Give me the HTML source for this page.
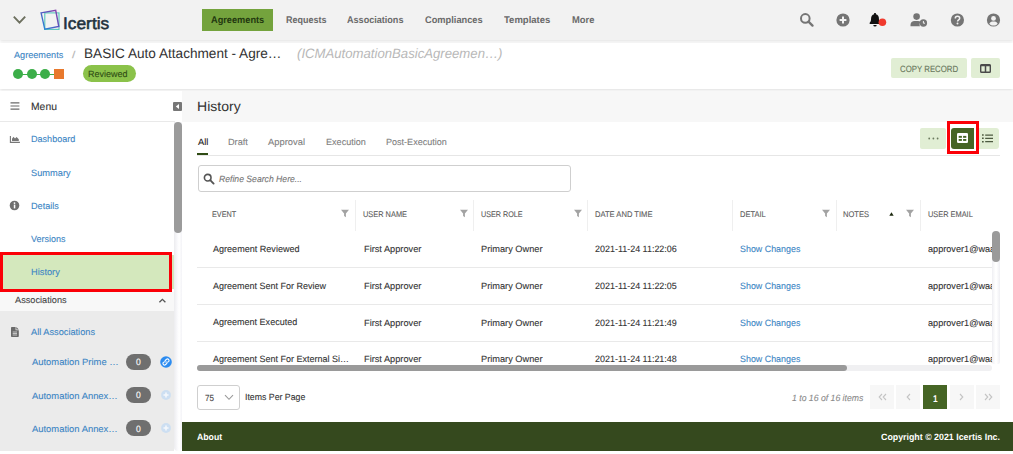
<!DOCTYPE html>
<html lang="en">
<head>
<meta charset="utf-8">
<title>History - Icertis Contract Management</title>
<style>
*{box-sizing:border-box;margin:0;padding:0}
html,body{width:1013px;height:454px;overflow:hidden;background:#fff}
body{font-family:"Liberation Sans",sans-serif;color:#333;position:relative}
a{text-decoration:none}
.b,.t,svg{position:absolute;display:block}
.t{white-space:nowrap;transform-origin:0 50%;font-weight:normal;text-rendering:geometricPrecision;-webkit-text-stroke:.1px currentColor}
.nav{font-size:9.7px;line-height:11.64px;color:#6a6a6a;font-weight:bold;-webkit-text-stroke:0;}
.navon{font-size:9.7px;line-height:11.64px;color:#22380f;font-weight:bold;-webkit-text-stroke:0;}
.logo{font-size:16.5px;line-height:19.8px;color:#22323d;-webkit-text-stroke:0.55px #22323d;}
.crumb{font-size:9.15px;line-height:10.98px;color:#3b85c4;}
.slash{font-size:10px;line-height:12.0px;color:#b5b5b5;}
.title{font-size:13.75px;line-height:16.5px;color:#333;-webkit-text-stroke:0;}
.sub{font-size:13.6px;line-height:16.32px;color:#b8b8b8;font-style:italic;-webkit-text-stroke:0;}
.pill{font-size:9.1px;line-height:10.92px;color:#2f4d14;}
.btn{font-size:9.1px;line-height:10.92px;color:#66755a;}
.menu{font-size:10.4px;line-height:12.48px;color:#333;}
.h1{font-size:13.6px;line-height:16.32px;color:#333;-webkit-text-stroke:0;}
.side{font-size:9.15px;line-height:10.98px;color:#3b85c4;}
.assoc{font-size:9.15px;line-height:10.98px;color:#444;}
.badge{font-size:9.15px;line-height:10.98px;color:#fff;}
.tabon{font-size:9.15px;line-height:10.98px;color:#222;}
.tab{font-size:9.15px;line-height:10.98px;color:#808080;}
.ph{font-size:9.15px;line-height:10.98px;color:#747474;font-style:italic;}
.th{font-size:8.3px;line-height:9.96px;color:#5a5a5a;}
.td{font-size:9.15px;line-height:10.98px;color:#333;}
.link{font-size:9.15px;line-height:10.98px;color:#3b85c4;}
.sel{font-size:9.15px;line-height:10.98px;color:#444;}
.ipp{font-size:9.15px;line-height:10.98px;color:#333;}
.info{font-size:9.15px;line-height:10.98px;color:#8a8a8a;font-style:italic;}
.pg1{font-size:9.8px;line-height:11.76px;color:#fff;font-weight:bold;-webkit-text-stroke:0;}
.foot{font-size:9.15px;line-height:10.98px;color:#fff;font-weight:bold;-webkit-text-stroke:0;}

/* blocks */
#nav-bg{left:0;top:0;width:1013px;height:40px;background:#f2f2f2;box-shadow:0 1px 3px rgba(0,0,0,.13)}
#nav-on{left:202px;top:9px;width:71px;height:22px;background:#74a33d}
#hdr-bg{left:0;top:43px;width:1013px;height:46px;background:#fff;box-shadow:0 1px 3px rgba(0,0,0,.14)}
.dot{width:10px;height:10px;border-radius:50%;background:#3cae49;top:69px}
#pill{left:83px;top:65px;width:53px;height:17px;border-radius:9px;background:#8bc24a}
.lbtn{background:#e1eed4;border-radius:2px}
#side-bg{left:0;top:91px;width:182px;height:360px;background:#fff}
#menu-line{left:0;top:121px;width:175px;height:1px;background:#e9e9e9}
#sb-track{left:174px;top:122px;width:8px;height:329px;border-radius:0 0 4px 4px;background:linear-gradient(90deg,#ececef,#fafafc 45%,#fff 65%,#f3f3f7)}
#sb-thumb{left:174px;top:122px;width:8px;height:111px;border-radius:4px;background:#9b9b9b}
#sel-bg{left:0;top:255px;width:174px;height:34px;background:#d4e8bd}
#sel-red{left:0;top:252px;width:172px;height:40px;border:3px solid #fb0007}
#assoc-hd{left:0;top:292px;width:174px;height:19px;background:#f8f8f8}
#assoc-bg{left:0;top:311px;width:174px;height:140px;background:#ebebeb}
.badge-bg{left:126px;width:25px;height:16px;border-radius:8px;background:#6f6f6f}
#band{left:182px;top:91px;width:831px;height:31px;background:#f7f7f7}
#tab-ul{left:197px;top:153px;width:11px;height:2px;background:#2f4b14}
#tab-line{left:197px;top:155px;width:803px;height:1px;background:#e6e6e6}
#search{left:198px;top:165px;width:373px;height:27px;border:1px solid #cfcfcf;border-radius:3px;background:#fff}
.colsep{top:200px;width:1px;height:31px;background:#efefef}
.rowsep{left:197px;width:795px;height:1px;background:#e9e9e9}
#vtrack{left:992px;top:231px;width:8px;height:134px;border-radius:4px;background:linear-gradient(90deg,#efeff3,#fff 45%,#fff 55%,#efeff3)}
#vthumb{left:992px;top:231px;width:8px;height:31px;border-radius:4px;background:#9a9a9a}
#htrack{left:197px;top:365px;width:795px;height:6px;border-radius:3px;background:#f0f0f2}
#hthumb{left:197px;top:365px;width:650px;height:6px;border-radius:3px;background:#9a9a9a}
#ppsel{left:197px;top:385px;width:43px;height:25px;border:1px solid #cfcfcf;border-radius:3px;background:#fff}
.pgb{top:385px;width:24px;height:24px;background:#f7f7f7}
#red2{left:947px;top:121px;width:32px;height:33px;border:3px solid #fb0007}
#foot-bg{left:182px;top:422px;width:831px;height:29px;background:#35491e}
</style>
</head>
<body>

<nav>
  <div class="b" id="nav-bg"></div>
  <svg style="left:12px;top:14px" width="16" height="12" viewBox="0 0 16 12"><path d="M1.8 2.6 L7.5 8.6 L13.2 2.6" fill="none" stroke="#6d705f" stroke-width="1.9"/></svg>
  <svg style="left:39px;top:8px" width="23" height="24" viewBox="0 0 23 24">
    <defs><linearGradient id="lg" x1="1" y1="0" x2="0" y2="1"><stop offset="0" stop-color="#8d3fa6"/><stop offset=".45" stop-color="#5a55c0"/><stop offset="1" stop-color="#1f8fd9"/></linearGradient></defs>
    <rect x="5.8" y="4.9" width="14.2" height="16.5" fill="none" stroke="#57c6bb" stroke-width="1.1"/>
    <path d="M2.1 4.9 L16.7 2.3 L19.8 18.5 L5.8 21.3 Z" fill="none" stroke="url(#lg)" stroke-width="1.4"/>
  </svg>
  <div class="b" id="nav-on"></div>
<span class="t logo" style="left:63.1px;top:15px;transform:scaleX(1.050);">Icertis</span>
<a class="t navon" style="left:210.8px;top:15px;transform:scaleX(0.951);">Agreements</a>
<a class="t nav" style="left:285.8px;top:15px;transform:scaleX(0.928);">Requests</a>
<a class="t nav" style="left:347.3px;top:15px;transform:scaleX(0.936);">Associations</a>
<a class="t nav" style="left:424.9px;top:15px;transform:scaleX(0.956);">Compliances</a>
<a class="t nav" style="left:503.8px;top:15px;transform:scaleX(0.982);">Templates</a>
<a class="t nav" style="left:571.5px;top:15px;transform:scaleX(0.967);">More</a>
  <!-- search -->
  <svg style="left:799px;top:13px" width="15" height="15" viewBox="0 0 15 15"><circle cx="6.300" cy="5.400" r="4.300" fill="none" stroke="#757575" stroke-width="2"/><path d="M9.500 8.600 L13.500 12.600" stroke="#757575" stroke-width="2.300" stroke-linecap="round"/></svg>
  <!-- plus circle -->
  <svg style="left:836px;top:13px" width="14" height="14" viewBox="0 0 14 14"><circle cx="7" cy="7" r="6.6" fill="#757575"/><path d="M7 3.6 V10.4 M3.6 7 H10.4" stroke="#f2f2f2" stroke-width="2"/></svg>
  <!-- bell -->
  <svg style="left:868px;top:13px" width="20" height="15" viewBox="0 0 20 15"><path d="M6.1 0.6 a0.9 0.9 0 0 1 1.8 0 v0.6 c2 .5 3 2.1 3 4.1 c0 2.6 .6 3.6 1.4 4.4 c.4 .5 .1 1.3 -.6 1.3 H2.3 c-.7 0 -1 -.8 -.6 -1.3 c.8 -.8 1.4 -1.800 1.4 -4.4 c0 -2 1 -3.600 3 -4.100 z M5.3 11.900 h3.400 a1.700 1.700 0 0 1 -3.400 0 z" fill="#111"/><circle cx="14.400" cy="9.200" r="3.800" fill="#f03a2e"/></svg>
  <!-- user clock -->
  <svg style="left:910px;top:13px" width="18" height="14" viewBox="0 0 18 14"><circle cx="6.600" cy="3.600" r="3.300" fill="#757575"/><path d="M0.500 13.200 v-1.500 c0 -2.200 1.800 -3.800 4 -3.800 h3.600 c.9 0 1.700 .3 2.400 .8 c-.6 .8 -.9 1.700 -.9 2.700 c0 .6 .1 1.200 .4 1.800 z" fill="#757575"/><circle cx="13.400" cy="10" r="3.700" fill="#757575"/><path d="M13.400 8 V10.200 H15" stroke="#f2f2f2" stroke-width="1" fill="none"/></svg>
  <!-- question -->
  <svg style="left:950px;top:13px" width="15" height="14" viewBox="-0.4 0 15 14"><circle cx="7" cy="7" r="6.600" fill="#757575"/><path d="M4.900 5.400 c0 -1.300 1 -2.100 2.200 -2.100 c1.300 0 2.200 .8 2.200 1.900 c0 1.600 -2.100 1.600 -2.100 3.200" fill="none" stroke="#f2f2f2" stroke-width="1.500"/><circle cx="7.100" cy="10.500" r="1" fill="#f2f2f2"/></svg>
  <!-- user circle -->
  <svg style="left:986px;top:13px" width="15" height="14" viewBox="-0.5 0 15 14"><circle cx="7" cy="7" r="6.600" fill="#757575"/><circle cx="7" cy="5.400" r="2.400" fill="#f2f2f2"/><path d="M2.800 10.700 c.7 -1.500 2 -2.100 4.200 -2.100 s3.500 .6 4.200 2.100 c-1 1.200 -2.500 1.900 -4.200 1.900 s-3.200 -.7 -4.200 -1.900 z" fill="#f2f2f2"/></svg>
</nav>

<header>
  <div class="b" id="hdr-bg"></div>
  <div class="b" style="left:18px;top:74px;width:40px;height:1px;background:#3cae49"></div>
  <div class="b dot" style="left:13px"></div>
  <div class="b dot" style="left:27px"></div>
  <div class="b dot" style="left:40px"></div>
  <div class="b" style="left:54px;top:69px;width:10px;height:10px;background:#e8792d"></div>
  <div class="b" id="pill"></div>
  <div class="b lbtn" style="left:891px;top:58px;width:76px;height:20px"></div>
  <div class="b lbtn" style="left:971px;top:58px;width:29px;height:20px"></div>
  <svg style="left:980px;top:64px" width="11" height="9" viewBox="0 0 11 9"><rect x=".7" y=".7" width="9.600" height="7.600" rx=".8" fill="none" stroke="#4a4a4a" stroke-width="1.400"/><path d="M.7 1.600 H10.300 M5.500 1 V8.500" stroke="#4a4a4a" stroke-width="1.500"/></svg>
<a class="t crumb" style="left:14.1px;top:50px;transform:scaleX(1.001);">Agreements</a>
<span class="t slash" style="left:71.8px;top:50px;transform:scaleX(1.223);">/</span>
<span class="t title" style="left:83.6px;top:46px;transform:scaleX(0.990);">BASIC Auto Attachment - Agre…</span>
<span class="t sub" style="left:297.4px;top:46px;transform:scaleX(0.968);">(ICMAutomationBasicAgreemen…)</span>
<span class="t pill" style="left:87.9px;top:69px;transform:scaleX(0.988);">Reviewed</span>
<span class="t btn" style="left:900.0px;top:64px;transform:scaleX(0.861);">COPY RECORD</span>
</header>

<aside>
  <div class="b" id="side-bg"></div>
  <div class="b" id="menu-line"></div>
  <svg style="left:10px;top:102px" width="10" height="8" viewBox="0 0 10 8"><path d="M.5 .9 H9.400 M.5 4 H9.400 M.5 7.100 H9.400" stroke="#6a6a6a" stroke-width="1.200"/></svg>
  <svg style="left:173px;top:102px" width="9" height="9" viewBox="0 0 9 9"><rect width="9" height="9" rx="1" fill="#777"/><path d="M6 2 L2.800 4.500 L6 7 Z" fill="#fff"/></svg>
  <!-- chart-area -->
  <svg style="left:9px;top:135px" width="12" height="9" viewBox="0 0 12 9"><path d="M1.400 .9 V7.400 H10.900" fill="none" stroke="#777" stroke-width="1.100"/><path d="M3 6.100 V3.700 L4.500 1.700 L6 3.500 L7.600 2 L9.800 4.300 V6.100 Z" fill="#777"/></svg>
  <!-- info -->
  <svg style="left:9px;top:200px" width="11" height="11" viewBox="0 0 11 11"><circle cx="5.500" cy="5.500" r="4.800" fill="#707070"/><rect x="4.800" y="4.600" width="1.500" height="3.800" fill="#fff"/><circle cx="5.500" cy="3.100" r=".9" fill="#fff"/></svg>
  <div class="b" id="sb-track"></div>
  <div class="b" id="sb-thumb"></div>
  <div class="b" id="sel-bg"></div>
  <div class="b" id="sel-red"></div>
  <div class="b" id="assoc-hd"></div>
  <div class="b" id="assoc-bg"></div>
  <svg style="left:158px;top:297px" width="9" height="7" viewBox="0 0 9 7"><path d="M1.400 5.300 L4.400 2.300 L7.400 5.300" fill="none" stroke="#555" stroke-width="1.300"/></svg>
  <!-- file -->
  <svg style="left:11px;top:327px" width="8" height="10" viewBox="0 0 8 10"><path d="M0 .8 a.8 .8 0 0 1 .8 -.8 H4.600 V3.200 H7.800 V9.200 a.8 .8 0 0 1 -.8 .8 H.8 a.8 .8 0 0 1 -.8 -.8 Z M5.300 0 L7.800 2.500 H5.300 Z" fill="#6a6a6a"/><path d="M1.700 5 H6 M1.700 6.500 H6 M1.700 8 H6" stroke="#ebebeb" stroke-width=".7"/></svg>
  <div class="b badge-bg" style="top:354px"></div>
  <div class="b badge-bg" style="top:387px"></div>
  <div class="b badge-bg" style="top:420px"></div>
  <svg style="left:160px;top:356px" width="12" height="12" viewBox="0 0 12 12"><circle cx="6" cy="6" r="5.800" fill="#2b8bf0"/><path d="M5.300 6.700 a1.600 1.600 0 0 1 0 -2.200 l1.300 -1.300 a1.600 1.600 0 0 1 2.200 2.200 l-.6 .6 M6.700 5.300 a1.600 1.600 0 0 1 0 2.200 l-1.300 1.300 a1.600 1.600 0 0 1 -2.200 -2.200 l.6 -.6" fill="none" stroke="#fff" stroke-width="1.100"/></svg>
  <svg style="left:161px;top:390px" width="10" height="10" viewBox="0 0 10 10"><circle cx="5" cy="5" r="4.900" fill="#cddff2"/><path d="M5 2.500 V7.500 M2.500 5 H7.500" stroke="#f6f9fc" stroke-width="1.500"/></svg>
  <svg style="left:161px;top:423px" width="10" height="10" viewBox="0 0 10 10"><circle cx="5" cy="5" r="4.900" fill="#cddff2"/><path d="M5 2.500 V7.500 M2.500 5 H7.500" stroke="#f6f9fc" stroke-width="1.500"/></svg>
<span class="t menu" style="left:30.6px;top:102px;transform:scaleX(0.996);">Menu</span>
<a class="t side" style="left:31.1px;top:134px;transform:scaleX(0.992);">Dashboard</a>
<a class="t side" style="left:31.1px;top:168px;transform:scaleX(1.014);">Summary</a>
<a class="t side" style="left:31.1px;top:201px;transform:scaleX(0.998);">Details</a>
<a class="t side" style="left:30.6px;top:234px;transform:scaleX(0.986);">Versions</a>
<a class="t side" style="left:31.1px;top:267px;transform:scaleX(1.015);">History</a>
<span class="t assoc" style="left:14.8px;top:295px;transform:scaleX(1.008);">Associations</span>
<a class="t side" style="left:30.6px;top:327px;transform:scaleX(1.010);">All Associations</a>
<a class="t side" style="left:31.6px;top:357px;transform:scaleX(1.029);">Automation Prime …</a>
<a class="t side" style="left:31.6px;top:391px;transform:scaleX(1.030);">Automation Annex…</a>
<a class="t side" style="left:31.6px;top:424px;transform:scaleX(1.030);">Automation Annex…</a>
<span class="t badge" style="left:136.0px;top:357px;transform:scaleX(0.943);">0</span>
<span class="t badge" style="left:136.0px;top:390px;transform:scaleX(0.943);">0</span>
<span class="t badge" style="left:136.0px;top:424px;transform:scaleX(0.943);">0</span>
</aside>

<main>
  <div class="b" id="band"></div>
  <div class="b" id="tab-line"></div>
  <div class="b" id="tab-ul"></div>
  <!-- toolbar buttons -->
  <div class="b lbtn" style="left:920px;top:128px;width:26px;height:21px"></div>
  <svg style="left:928px;top:137px" width="11" height="3" viewBox="0 0 11 3"><circle cx="1.200" cy="1.500" r=".9" fill="#6b7a5e"/><circle cx="5.400" cy="1.500" r=".9" fill="#6b7a5e"/><circle cx="9.600" cy="1.500" r=".9" fill="#6b7a5e"/></svg>
  <div class="b" style="left:951px;top:128px;width:23px;height:21px;background:#466525;border-radius:3px 0 0 3px"></div>
  <svg style="left:957px;top:133px" width="11" height="10" viewBox="0 0 11 10"><rect width="11" height="10" rx="1.200" fill="#fff"/><rect x="1.700" y="2.900" width="3.200" height="1.900" fill="#466525"/><rect x="6.100" y="2.900" width="3.200" height="1.900" fill="#466525"/><rect x="1.700" y="6" width="3.200" height="1.900" fill="#466525"/><rect x="6.100" y="6" width="3.200" height="1.900" fill="#466525"/></svg>
  <div class="b lbtn" style="left:979px;top:128px;width:20px;height:21px;border-radius:0 3px 3px 0"></div>
  <svg style="left:982px;top:134px" width="11" height="9" viewBox="0 0 11 9"><path d="M0 .3 H1.700 V1.800 H0 Z M0 3.600 H1.700 V5.100 H0 Z M0 6.900 H1.700 V8.400 H0 Z" fill="#4d5a40"/><path d="M3.200 1.050 H11 M3.200 4.350 H11 M3.200 7.650 H11" stroke="#4d5a40" stroke-width="1.200"/></svg>
  <div class="b" id="red2"></div>
  <!-- search -->
  <div class="b" id="search"></div>
  <svg style="left:203px;top:173px" width="12" height="12" viewBox="0 0 12 12"><circle cx="4.700" cy="4.700" r="3.300" fill="none" stroke="#555" stroke-width="1.600"/><path d="M7.200 7.200 L10.600 10.600" stroke="#555" stroke-width="1.900" stroke-linecap="round"/></svg>
  <!-- column separators + filter icons -->
  <div class="b colsep" style="left:355px"></div>
  <div class="b colsep" style="left:473px"></div>
  <div class="b colsep" style="left:587px"></div>
  <div class="b colsep" style="left:732px"></div>
  <div class="b colsep" style="left:836px"></div>
  <div class="b colsep" style="left:920px"></div>
  <svg class="flt" style="left:341px;top:209px" width="8" height="9" viewBox="0 0 8 9"><path d="M0 .8 H8 L4.900 4.400 V8.200 L3.100 7 V4.400 Z" fill="#a3a3a3"/></svg>
  <svg class="flt" style="left:459.500px;top:209px" width="8" height="9" viewBox="0 0 8 9"><path d="M0 .8 H8 L4.900 4.400 V8.200 L3.100 7 V4.400 Z" fill="#a3a3a3"/></svg>
  <svg class="flt" style="left:573.500px;top:209px" width="8" height="9" viewBox="0 0 8 9"><path d="M0 .8 H8 L4.900 4.400 V8.200 L3.100 7 V4.400 Z" fill="#a3a3a3"/></svg>
  <svg class="flt" style="left:822px;top:209px" width="8" height="9" viewBox="0 0 8 9"><path d="M0 .8 H8 L4.900 4.400 V8.200 L3.100 7 V4.400 Z" fill="#a3a3a3"/></svg>
  <svg class="flt" style="left:905.500px;top:209px" width="8" height="9" viewBox="0 0 8 9"><path d="M0 .8 H8 L4.900 4.400 V8.200 L3.100 7 V4.400 Z" fill="#a3a3a3"/></svg>
  <svg style="left:889px;top:212px" width="5" height="4" viewBox="0 0 5 4"><path d="M2.500 .2 L4.700 3.800 H.3 Z" fill="#1d2a10"/></svg>
  <div class="b rowsep" style="top:267px"></div>
  <div class="b rowsep" style="top:304px"></div>
  <div class="b rowsep" style="top:341px"></div>
<h1 class="t h1" style="left:197.4px;top:99px;transform:scaleX(1.033);">History</h1>
<a class="t tabon" style="left:197.9px;top:137px;transform:scaleX(1.023);">All</a>
<a class="t tab" style="left:228.3px;top:137px;transform:scaleX(1.004);">Draft</a>
<a class="t tab" style="left:268.2px;top:137px;transform:scaleX(1.027);">Approval</a>
<a class="t tab" style="left:325.5px;top:137px;transform:scaleX(0.995);">Execution</a>
<a class="t tab" style="left:385.9px;top:137px;transform:scaleX(0.991);">Post-Execution</a>
<span class="t ph" style="left:219.1px;top:174px;transform:scaleX(0.946);">Refine Search Here...</span>
<span class="t th" style="left:211.7px;top:210px;transform:scaleX(0.875);">EVENT</span>
<span class="t th" style="left:363.2px;top:210px;transform:scaleX(0.892);">USER NAME</span>
<span class="t th" style="left:481.0px;top:210px;transform:scaleX(0.869);">USER ROLE</span>
<span class="t th" style="left:595.0px;top:210px;transform:scaleX(0.915);">DATE AND TIME</span>
<span class="t th" style="left:739.8px;top:210px;transform:scaleX(0.904);">DETAIL</span>
<span class="t th" style="left:842.7px;top:210px;transform:scaleX(0.913);">NOTES</span>
<span class="t th" style="left:927.6px;top:210px;transform:scaleX(0.891);">USER EMAIL</span>
<span class="t td" style="left:213.0px;top:244px;transform:scaleX(0.992);">Agreement Reviewed</span>
<span class="t td" style="left:363.7px;top:244px;transform:scaleX(1.010);">First Approver</span>
<span class="t td" style="left:481.0px;top:244px;transform:scaleX(1.011);">Primary Owner</span>
<span class="t td" style="left:595.0px;top:244px;transform:scaleX(0.981);">2021-11-24 11:22:06</span>
<a class="t link" style="left:739.8px;top:244px;transform:scaleX(0.975);">Show Changes</a>
<span class="t td" style="left:927.6px;top:244px;transform:scaleX(1.001);width:64.5px;overflow:hidden;">approver1@waa</span>
<span class="t td" style="left:213.0px;top:281px;transform:scaleX(0.985);">Agreement Sent For Review</span>
<span class="t td" style="left:363.7px;top:281px;transform:scaleX(1.010);">First Approver</span>
<span class="t td" style="left:481.0px;top:281px;transform:scaleX(1.011);">Primary Owner</span>
<span class="t td" style="left:595.0px;top:281px;transform:scaleX(0.981);">2021-11-24 11:22:05</span>
<a class="t link" style="left:739.8px;top:281px;transform:scaleX(0.975);">Show Changes</a>
<span class="t td" style="left:927.6px;top:281px;transform:scaleX(1.001);width:64.5px;overflow:hidden;">approver1@waa</span>
<span class="t td" style="left:213.0px;top:317px;transform:scaleX(0.988);">Agreement Executed</span>
<span class="t td" style="left:363.7px;top:318px;transform:scaleX(1.010);">First Approver</span>
<span class="t td" style="left:481.0px;top:318px;transform:scaleX(1.011);">Primary Owner</span>
<span class="t td" style="left:595.0px;top:318px;transform:scaleX(0.981);">2021-11-24 11:21:49</span>
<a class="t link" style="left:739.8px;top:318px;transform:scaleX(0.975);">Show Changes</a>
<span class="t td" style="left:927.6px;top:318px;transform:scaleX(1.001);width:64.5px;overflow:hidden;">approver1@waa</span>
<span class="t td" style="left:213.0px;top:354px;transform:scaleX(0.985);">Agreement Sent For External Si…</span>
<span class="t td" style="left:363.7px;top:354px;transform:scaleX(1.010);">First Approver</span>
<span class="t td" style="left:481.0px;top:354px;transform:scaleX(1.011);">Primary Owner</span>
<span class="t td" style="left:595.0px;top:354px;transform:scaleX(0.981);">2021-11-24 11:21:48</span>
<a class="t link" style="left:739.8px;top:354px;transform:scaleX(0.975);">Show Changes</a>
<span class="t td" style="left:927.6px;top:354px;transform:scaleX(1.001);width:64.5px;overflow:hidden;">approver1@waa</span>
  <div class="b" id="vtrack"></div>
  <div class="b" id="vthumb"></div>
  <div class="b" style="left:197px;top:364px;width:803px;height:20px;background:#fff"></div>
  <div class="b" id="htrack"></div>
  <div class="b" id="hthumb"></div>
  <div class="b" id="ppsel"></div>
  <svg style="left:224px;top:394px" width="10" height="7" viewBox="0 0 10 7"><path d="M1 1.200 L5 5.300 L9 1.200" fill="none" stroke="#9a9a9a" stroke-width="1.100"/></svg>
  <div class="b pgb" style="left:870px"></div>
  <div class="b pgb" style="left:896px"></div>
  <div class="b pgb" style="left:923px;background:#466525"></div>
  <div class="b pgb" style="left:950px"></div>
  <div class="b pgb" style="left:976px"></div>
  <svg style="left:878px;top:393px" width="9" height="8" viewBox="0 0 9 8"><path d="M4 1 L1.200 4 L4 7 M8 1 L5.200 4 L8 7" fill="none" stroke="#c4c4c4" stroke-width="1.100"/></svg>
  <svg style="left:906px;top:393px" width="5" height="8" viewBox="0 0 5 8"><path d="M4 1 L1.200 4 L4 7" fill="none" stroke="#c4c4c4" stroke-width="1.100"/></svg>
  <svg style="left:959px;top:393px" width="5" height="8" viewBox="0 0 5 8"><path d="M1 1 L3.800 4 L1 7" fill="none" stroke="#c4c4c4" stroke-width="1.100"/></svg>
  <svg style="left:984px;top:393px" width="9" height="8" viewBox="0 0 9 8"><path d="M1 1 L3.800 4 L1 7 M5 1 L7.800 4 L5 7" fill="none" stroke="#c4c4c4" stroke-width="1.100"/></svg>
<span class="t sel" style="left:204.7px;top:393px;transform:scaleX(0.884);">75</span>
<span class="t ipp" style="left:245.0px;top:392px;transform:scaleX(0.959);">Items Per Page</span>
<span class="t info" style="left:792.4px;top:393px;transform:scaleX(0.950);">1 to 16 of 16 items</span>
<span class="t pg1" style="left:932.6px;top:394px;transform:scaleX(0.844);">1</span>
</main>

<footer>
  <div class="b" id="foot-bg"></div>
<span class="t foot" style="left:197.4px;top:432px;transform:scaleX(0.954);">About</span>
<span class="t foot" style="left:881.0px;top:432px;transform:scaleX(0.968);">Copyright © 2021 Icertis Inc.</span>
</footer>

</body>
</html>
